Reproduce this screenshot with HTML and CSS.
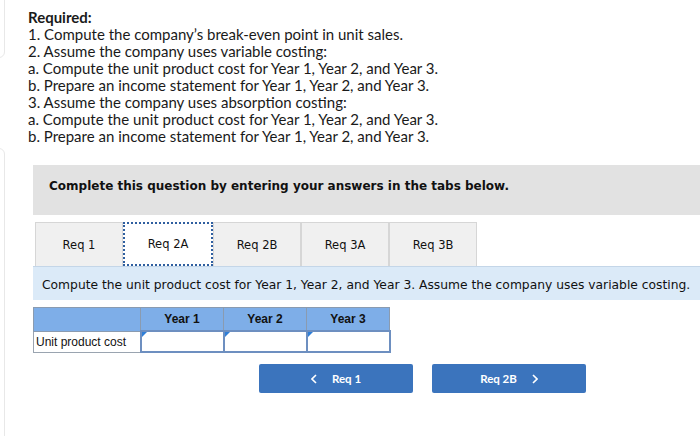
FILE: index.html
```html
<!DOCTYPE html>
<html>
<head>
<meta charset="utf-8">
<link rel="stylesheet" href="styles.css">
</head>
<body>
<div class="edge edge-top"></div>
<div class="edge edge-bottom"></div>
<div class="page">
  <div class="required">
    <div class="req-title">Required:</div>
    <div>1. Compute the company’s break-even point in unit sales.</div>
    <div>2. Assume the company uses variable costing:</div>
    <div>a. Compute the unit product cost for Year 1, Year 2, and Year 3.</div>
    <div>b. Prepare an income statement for Year 1, Year 2, and Year 3.</div>
    <div>3. Assume the company uses absorption costing:</div>
    <div>a. Compute the unit product cost for Year 1, Year 2, and Year 3.</div>
    <div>b. Prepare an income statement for Year 1, Year 2, and Year 3.</div>
  </div>

  <div class="panel">
    <div class="notice">Complete this question by entering your answers in the tabs below.</div>
    <div class="tabs">
      <div class="tab">Req 1</div>
      <div class="tab active">Req 2A</div>
      <div class="tab">Req 2B</div>
      <div class="tab">Req 3A</div>
      <div class="tab">Req 3B</div>
    </div>
    <div class="instr">Compute the unit product cost for Year 1, Year 2, and Year 3. Assume the company uses variable costing.</div>

    <table class="grid">
      <tr>
        <th class="blank"></th>
        <th>Year 1</th>
        <th>Year 2</th>
        <th>Year 3</th>
      </tr>
      <tr>
        <td class="label">Unit product cost</td>
        <td class="cell"><span class="inp"></span></td>
        <td class="cell"><span class="inp"></span></td>
        <td class="cell"><span class="inp"></span></td>
      </tr>
    </table>

    <div class="nav">
      <div class="btn"><svg class="chev" width="6" height="10" viewBox="0 0 6 10"><polyline points="5,1 1,5 5,9" fill="none" stroke="#fff" stroke-width="1.6"/></svg><span>Req 1</span></div>
      <div class="btn"><span>Req 2B</span><svg class="chev" width="6" height="10" viewBox="0 0 6 10"><polyline points="1,1 5,5 1,9" fill="none" stroke="#fff" stroke-width="1.6"/></svg></div>
    </div>
  </div>
</div>
</body>
</html>
```

FILE: styles.css
```css
html, body {
  margin: 0;
  padding: 0;
  background: #ffffff;
  overflow: hidden;
}
body {
  width: 700px;
  height: 436px;
  position: relative;
}
.edge {
  position: absolute;
  left: -10px;
  width: 13px;
  border: 1px solid #e8e8e8;
}
.edge-top {
  top: -10px;
  height: 66px;
  border-radius: 0 0 6px 0;
}
.edge-bottom {
  top: 148px;
  height: 300px;
  border-radius: 0 6px 0 0;
}
.page {
  padding-top: 9px;
}
.required {
  margin-left: 28px;
  font-family: "Lato", "Liberation Sans", sans-serif;
  font-size: 15px;
  line-height: 17px;
  color: #1a1a1a;
}
.req-title {
  font-weight: bold;
}
.panel {
  margin-left: 33px;
  margin-top: 20px;
}
.notice {
  background: #e2e2e2;
  height: 50px;
  box-sizing: border-box;
  padding: 14px 0 0 16px;
  font-family: "DejaVu Sans", Verdana, sans-serif;
  font-weight: bold;
  font-size: 12px;
  color: #111;
}
.tabs {
  display: flex;
  margin-top: 7px;
  margin-left: 2px;
  height: 44px;
}
.tab {
  box-sizing: border-box;
  width: 88px;
  height: 44px;
  background: #f0f0f0;
  border: 1px solid #d6d6d6;
  border-bottom: none;
  display: flex;
  align-items: center;
  justify-content: center;
  font-family: "DejaVu Sans", Verdana, sans-serif;
  font-size: 11.5px;
  color: #111;
}
.tab.active {
  background: #ffffff;
  border: 2px dotted #2f5fa0;
  width: 90px;
}
.instr {
  background: #dbeaf8;
  height: 34px;
  box-sizing: border-box;
  padding: 11px 0 0 9px;
  font-family: "DejaVu Sans", Verdana, sans-serif;
  font-size: 12.3px;
  color: #111;
  white-space: nowrap;
  border-top: 1px solid #c4d6e8;
}
.grid {
  margin-top: 7px;
  border-collapse: collapse;
  font-family: "Liberation Sans", Arial, sans-serif;
  font-size: 12px;
}
.grid th {
  background: #7eaee8;
  border: 1px solid #8a9bb0;
  height: 22px;
  width: 82px;
  padding: 0;
  font-weight: bold;
  color: #111;
}
.grid th.blank {
  width: 106px;
}
.grid td {
  border: 1px solid #9aa4b0;
  height: 19px;
  padding: 0;
}
.grid td.label {
  padding-left: 2px;
  color: #111;
}
.grid td.cell {
  position: relative;
  border: 2px solid #6d8fc0;
  background: #fff;
}
.inp {
  position: absolute;
  left: 0;
  top: 0;
  width: 0;
  height: 0;
  border-top: 5px solid #2f7fd8;
  border-right: 5px solid transparent;
}
.nav {
  display: flex;
  gap: 19px;
  margin-top: 11px;
  margin-left: 226px;
}
.btn {
  width: 154px;
  height: 29px;
  background: #3b74bd;
  border-radius: 2px;
  display: flex;
  align-items: center;
  justify-content: center;
  gap: 15px;
  color: #fff;
  font-family: "Lato", "Liberation Sans", sans-serif;
  font-weight: bold;
  font-size: 11.5px;
}
.chev {
  display: block;
}
```
